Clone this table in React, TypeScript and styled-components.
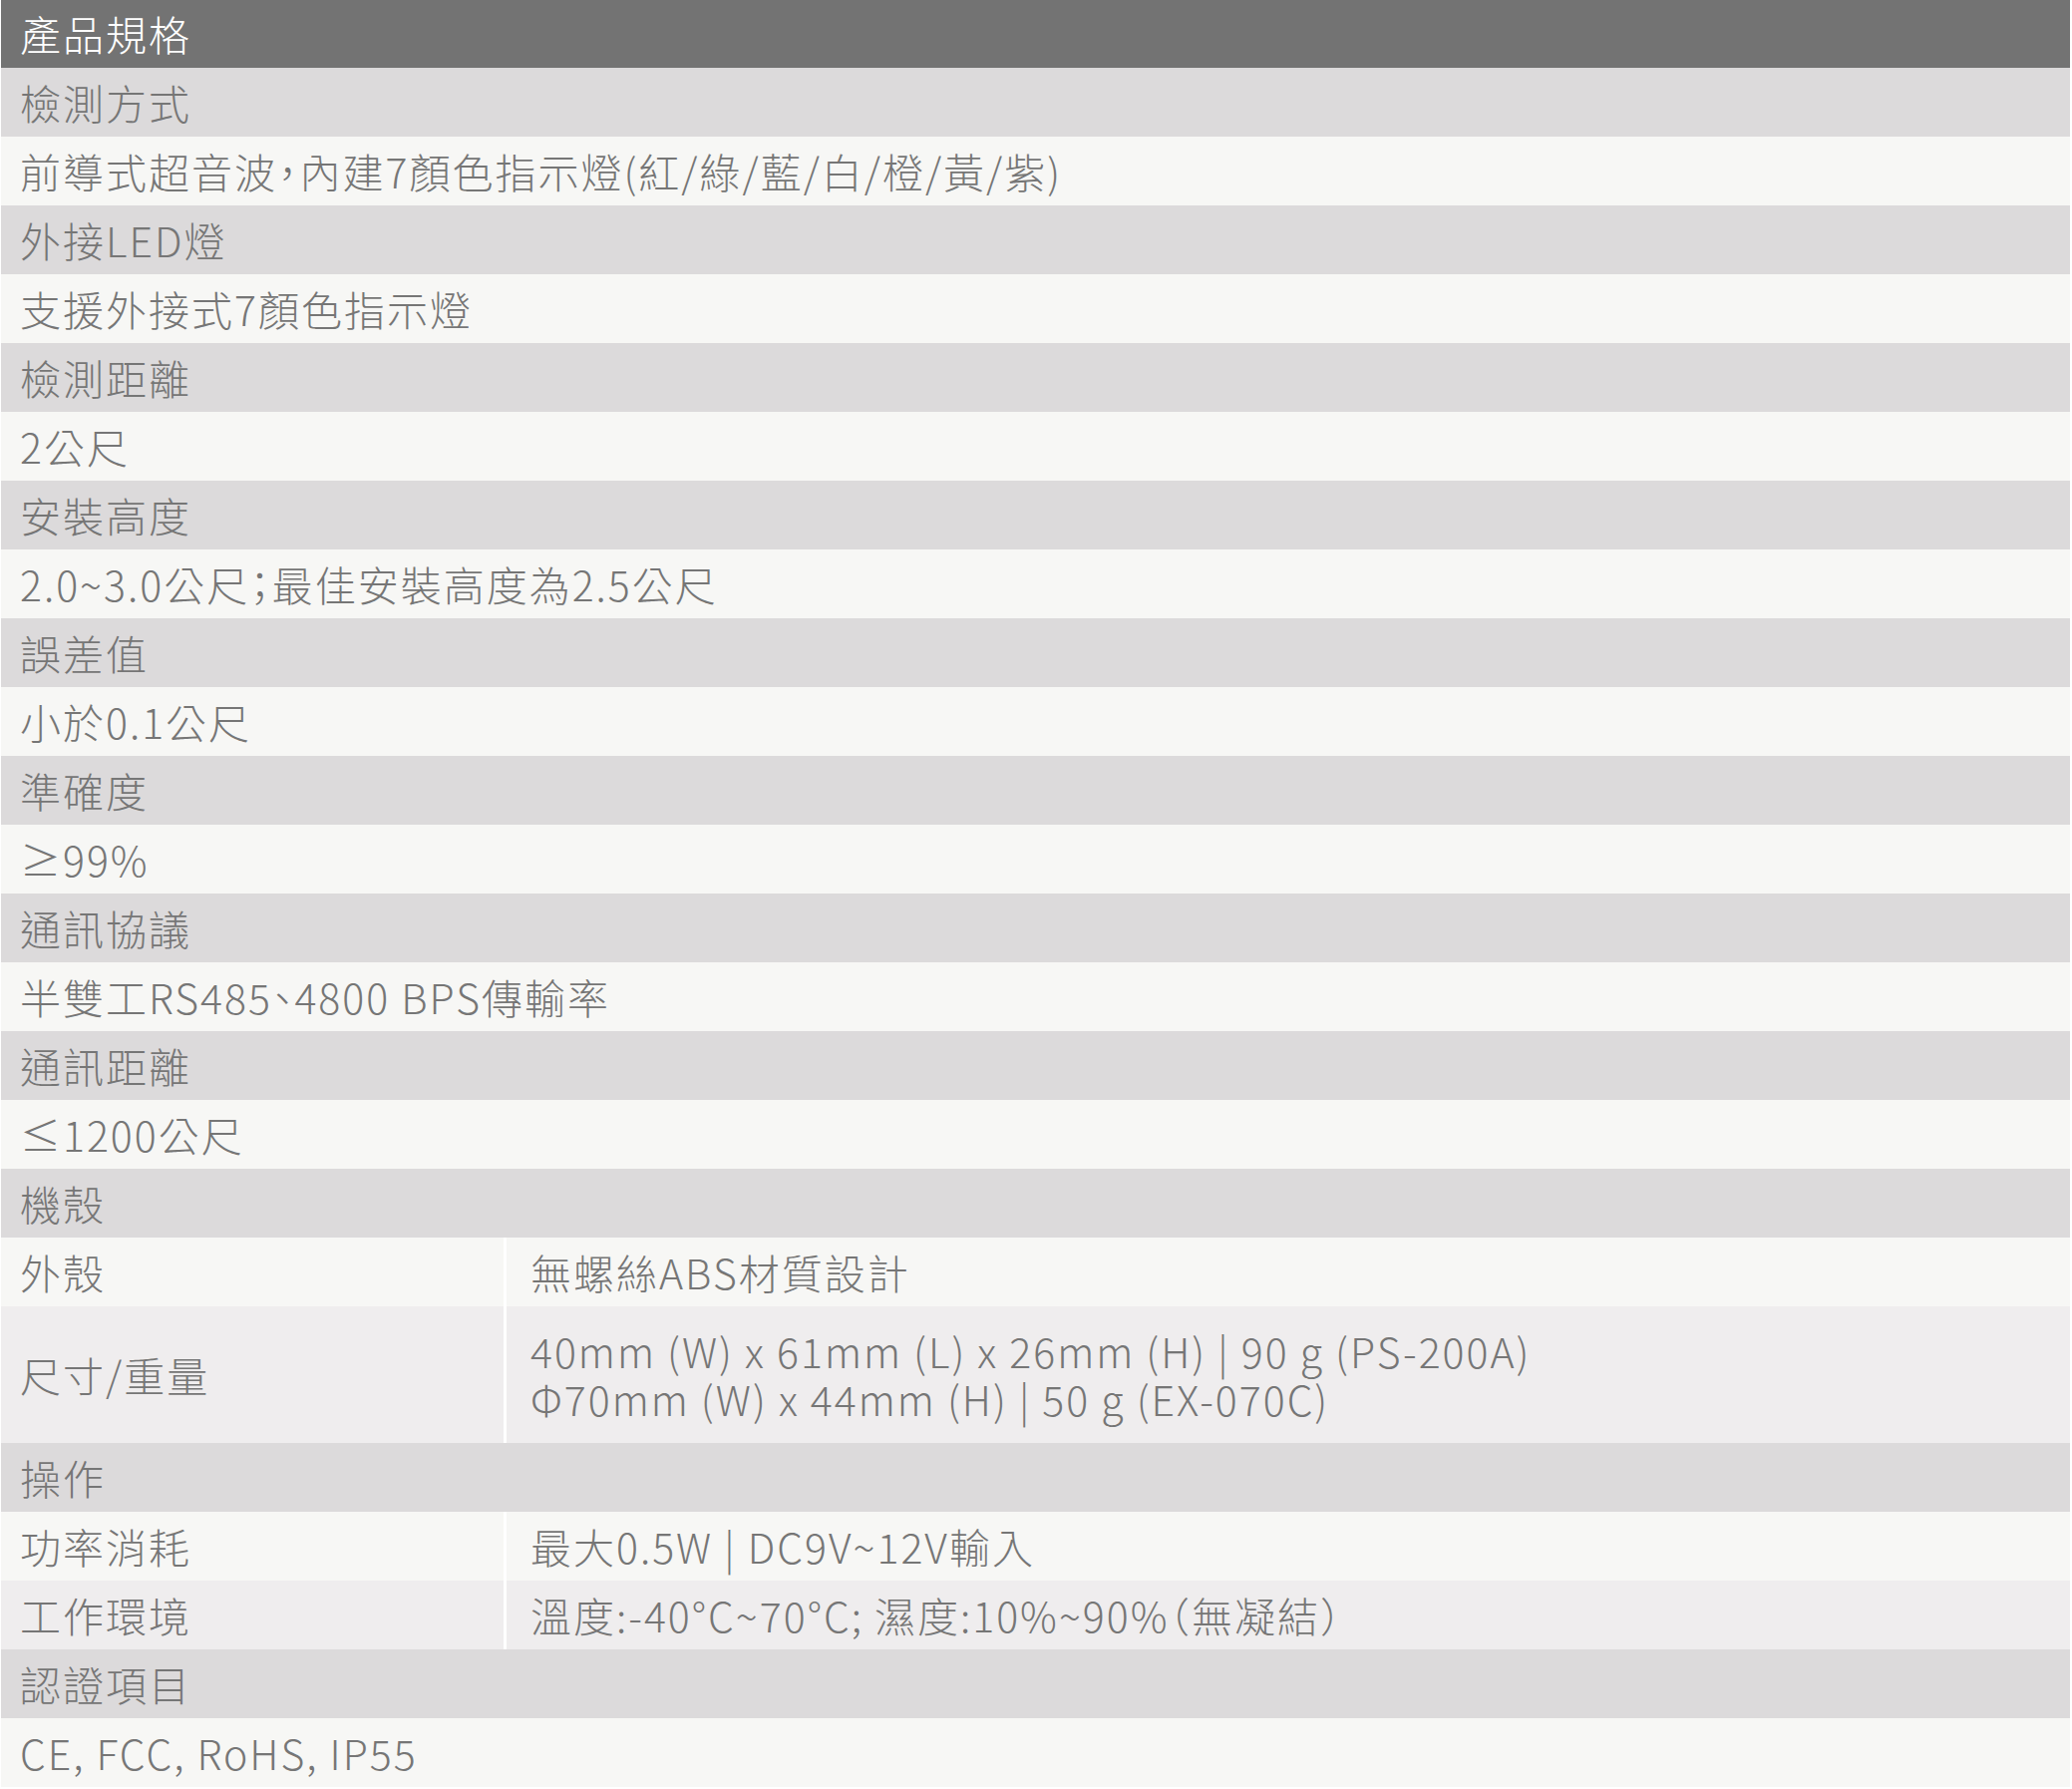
import React from "react";
import styled, { createGlobalStyle } from "styled-components";

const Global = createGlobalStyle`
  html, body { margin: 0; padding: 0; background: #ffffff; }
  body { font-family: "Noto Sans CJK TC", "Noto Sans CJK SC", "Noto Sans", sans-serif; }
`;

const Table = styled.div`
  width: 2078px;
  padding: 0 2px 0 1px;
  box-sizing: border-box;
  display: flex;
  flex-direction: column;
  background: #ffffff;
`;

type Tone = "head" | "cat" | "light" | "alt";
const bg: Record<Tone, string> = {
  head: "#737373",
  cat: "#dcdadb",
  light: "#f7f7f5",
  alt: "#efedee",
};

const Cell = styled.div<{ $tone: Tone; $h?: number; $pl?: number }>`
  height: ${(p) => p.$h ?? 69}px;
  box-sizing: border-box;
  display: flex;
  flex-direction: column;
  justify-content: center;
  padding-left: ${(p) => p.$pl ?? 19}px;
  padding-bottom: 2px;
  background: ${(p) => bg[p.$tone]};
  color: ${(p) => (p.$tone === "head" ? "#ffffff" : "#767676")};
  font-size: 41px;
  font-weight: 300;
  letter-spacing: 2px;
  line-height: 48px;
  white-space: nowrap;
  font-feature-settings: "halt";
`;

const Pair = styled.div`
  display: grid;
  grid-template-columns: 504px 1fr;
  column-gap: 3px;
`;

const Line = styled.span`
  display: block;
`;

type Row =
  | { kind: "head" | "cat" | "light"; text: string }
  | { kind: "pair"; tone: Tone; label: string; value: string[]; h?: number };

const rows: Row[] = [
  { kind: "cat", text: "檢測方式" },
  { kind: "light", text: "前導式超音波，內建7顏色指示燈(紅/綠/藍/白/橙/黃/紫)" },
  { kind: "cat", text: "外接LED燈" },
  { kind: "light", text: "支援外接式7顏色指示燈" },
  { kind: "cat", text: "檢測距離" },
  { kind: "light", text: "2公尺" },
  { kind: "cat", text: "安裝高度" },
  { kind: "light", text: "2.0~3.0公尺；最佳安裝高度為2.5公尺" },
  { kind: "cat", text: "誤差值" },
  { kind: "light", text: "小於0.1公尺" },
  { kind: "cat", text: "準確度" },
  { kind: "light", text: "≥99%" },
  { kind: "cat", text: "通訊協議" },
  { kind: "light", text: "半雙工RS485、4800 BPS傳輸率" },
  { kind: "cat", text: "通訊距離" },
  { kind: "light", text: "≤1200公尺" },
  { kind: "cat", text: "機殼" },
  { kind: "pair", tone: "light", label: "外殼", value: ["無螺絲ABS材質設計"] },
  {
    kind: "pair",
    tone: "alt",
    label: "尺寸/重量",
    value: [
      "40mm (W) x 61mm (L) x 26mm (H) | 90 g (PS-200A)",
      "Φ70mm (W) x 44mm (H) | 50 g (EX-070C)",
    ],
    h: 137,
  },
  { kind: "cat", text: "操作" },
  { kind: "pair", tone: "light", label: "功率消耗", value: ["最大0.5W | DC9V~12V輸入"] },
  { kind: "pair", tone: "alt", label: "工作環境", value: ["溫度:-40°C~70°C; 濕度:10%~90%（無凝結）"] },
  { kind: "cat", text: "認證項目" },
  { kind: "light", text: "CE, FCC, RoHS, IP55" },
];

export default function App() {
  return (
    <>
      <Global />
      <Table>
        <Cell $tone="head" $h={68}>產品規格</Cell>
        {rows.map((r, i) =>
          r.kind === "pair" ? (
            <Pair key={i}>
              <Cell $tone={r.tone} $h={r.h}>{r.label}</Cell>
              <Cell $tone={r.tone} $h={r.h} $pl={24}>
                {r.value.map((v, j) => (
                  <Line key={j}>{v}</Line>
                ))}
              </Cell>
            </Pair>
          ) : (
            <Cell key={i} $tone={r.kind}>{r.text}</Cell>
          )
        )}
      </Table>
    </>
  );
}
